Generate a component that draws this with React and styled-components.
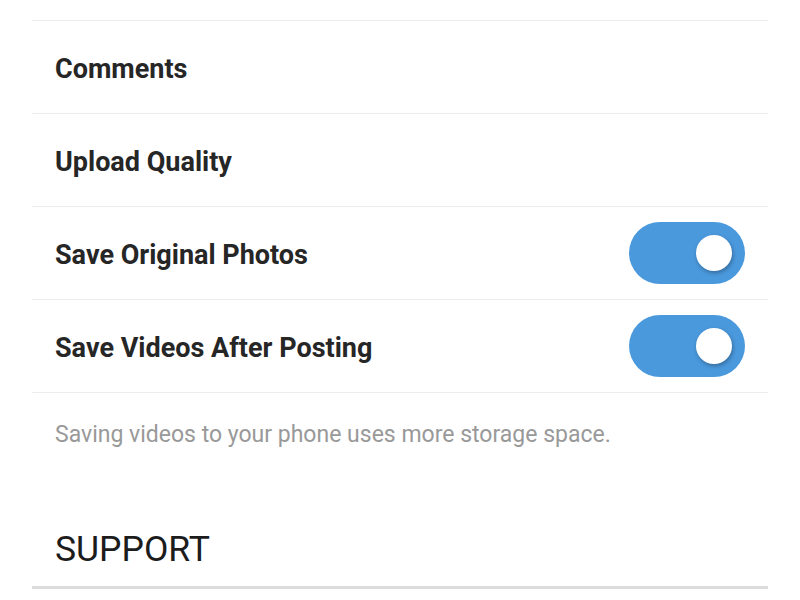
import React from 'react';
import styled, { createGlobalStyle } from 'styled-components';

const GlobalStyle = createGlobalStyle`
    body {
        margin: 0;
        background: #ffffff;
        font-family: Roboto, "Liberation Sans", sans-serif;
    }
`;

const Page = styled.div`
    width: 800px;
    height: 600px;
    overflow: hidden;
    background: #ffffff;
    padding-top: 20px;
    box-sizing: border-box;
`;

const List = styled.div`
    margin: 0 32px;
    display: flex;
    flex-direction: column;
`;

const Row = styled.div`
    height: 92px;
    border-top: 1px solid #ececec;
    display: flex;
    align-items: center;
    justify-content: space-between;
    padding: 0 23px;
    &:last-child {
        border-bottom: 1px solid #ececec;
    }
`;

const Label = styled.span`
    padding-top: 3px;
    font-size: 27px;
    font-weight: 700;
    color: #262626;
`;

const Switch = styled.div`
    position: relative;
    width: 116px;
    height: 62px;
    border-radius: 31px;
    background: ${props => (props.on ? '#4a99dd' : '#cccccc')};
    flex-shrink: 0;
`;

const Knob = styled.div`
    position: absolute;
    top: 13px;
    left: ${props => (props.on ? '67px' : '13px')};
    width: 36px;
    height: 36px;
    border-radius: 50%;
    background: #ffffff;
    box-shadow: 1px 2px 4px rgba(0, 0, 0, 0.3);
`;

const Note = styled.p`
    margin: 0;
    padding: 27px 55px 0;
    font-size: 23px;
    line-height: 30px;
    color: #999999;
    font-weight: 400;
`;

const SectionTitle = styled.h2`
    margin: 77px 32px 0;
    padding: 0 23px 15px;
    font-size: 35.5px;
    line-height: 44px;
    font-weight: 400;
    color: #1c1c1c;
    border-bottom: 3px solid #dcdcdc;
`;

const Toggle = ({ on }) => (
    <Switch on={on}>
        <Knob on={on} />
    </Switch>
);

const App = () => {
    const rows = [
        { label: 'Comments' },
        { label: 'Upload Quality' },
        { label: 'Save Original Photos', toggle: true },
        { label: 'Save Videos After Posting', toggle: true },
    ];

    return (
        <Page>
            <GlobalStyle />
            <List>
                {rows.map(row => (
                    <Row key={row.label}>
                        <Label>{row.label}</Label>
                        {row.toggle && <Toggle on />}
                    </Row>
                ))}
            </List>
            <Note>Saving videos to your phone uses more storage space.</Note>
            <SectionTitle>SUPPORT</SectionTitle>
        </Page>
    );
};

export default App;
